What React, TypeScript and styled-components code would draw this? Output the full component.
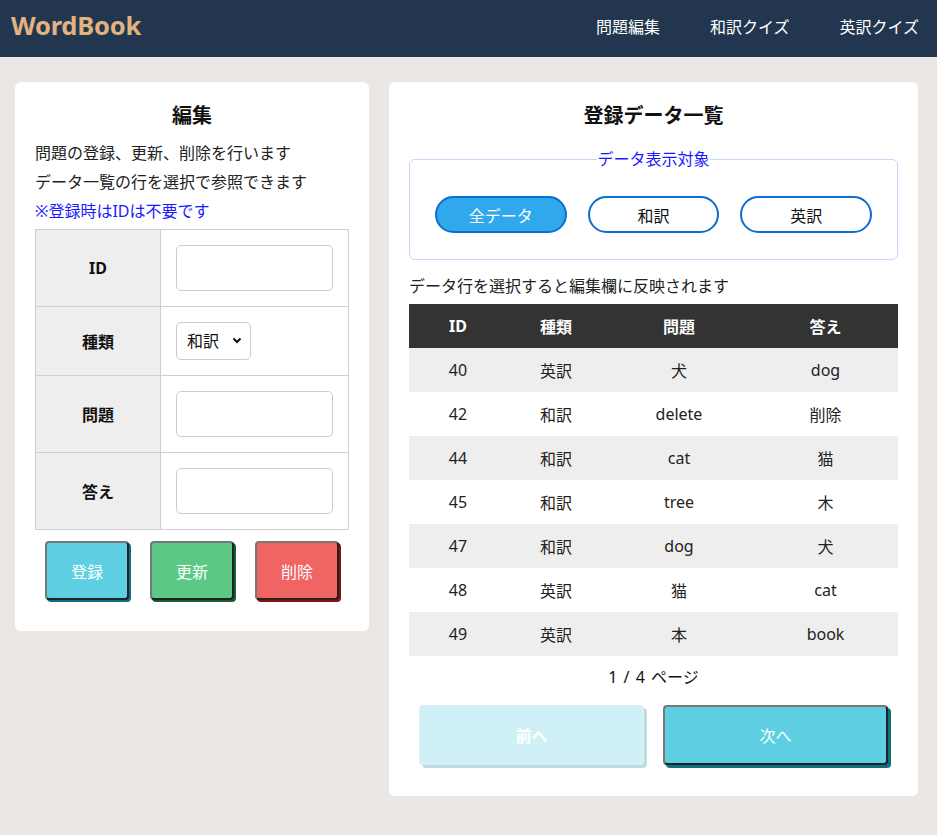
import React from "react";
import styled, { createGlobalStyle } from "styled-components";

const FONT = `"Noto Sans", "Noto Sans CJK JP", sans-serif`;

const GlobalStyle = createGlobalStyle`
  html, body {
    margin: 0;
    padding: 0;
    background: #ebe7e5;
    font-family: ${FONT};
    color: #222;
  }
  * { box-sizing: border-box; }
`;

const Header = styled.header`
  height: 57px;
  background: #22374f;
  display: flex;
  align-items: center;
  justify-content: space-between;
  padding: 0 18px 0 11px;
`;

const Logo = styled.div`
  font-size: 25.5px;
  font-weight: 700;
  color: #e3b37f;
  letter-spacing: -0.2px;
  margin-top: -7px;
`;

const Nav = styled.nav`
  display: flex;
  gap: 50px;
  margin-top: -6px;
`;

const NavItem = styled.a`
  color: #fff;
  font-size: 16px;
  text-decoration: none;
`;

const Main = styled.main`
  display: flex;
  align-items: flex-start;
  gap: 20px;
  padding: 25px 19px 20px 15px;
`;

const Card = styled.section<{ $width: number }>`
  width: ${(p) => p.$width}px;
  background: #fff;
  border-radius: 6px;
  padding: 20px 20px ${(p) => (p.$width > 400 ? 31 : 31)}px;
`;

const Title = styled.h2<{ $mb: number }>`
  margin: 0 0 ${(p) => p.$mb}px;
  font-size: 20px;
  line-height: 27px;
  font-weight: 700;
  text-align: center;
  color: #111;
`;

const Line = styled.p<{ $note?: boolean }>`
  margin: 0;
  font-size: 16px;
  line-height: 29px;
  color: ${(p) => (p.$note ? "#1a1aff" : "#222")};
`;

const FormTable = styled.table`
  margin-top: 3px;
  width: 100%;
  border-collapse: collapse;
  border: 1px solid #cfcfcf;
`;

const LabelCell = styled.th`
  width: 125px;
  background: #eeeeee;
  border: 1px solid #cfcfcf;
  font-size: 16px;
  font-weight: 700;
  color: #111;
  text-align: center;
`;

const FieldCell = styled.td<{ $h: number }>`
  height: ${(p) => p.$h}px;
  border: 1px solid #cfcfcf;
  padding: 0 15px;
`;

const TextInput = styled.input`
  display: block;
  width: 100%;
  height: 46px;
  border: 1px solid #cccccc;
  border-radius: 5px;
  font-family: ${FONT};
  font-size: 16px;
  padding: 0 10px;
  outline: none;
`;

const SelectWrap = styled.div`
  position: relative;
  width: 75px;
  height: 38px;
`;

const Select = styled.select`
  appearance: none;
  width: 100%;
  height: 100%;
  border: 1px solid #cccccc;
  border-radius: 5px;
  background: #fff;
  font-family: ${FONT};
  font-size: 16px;
  color: #111;
  padding: 0 0 0 10px;
`;

const Chevron = styled.svg`
  position: absolute;
  right: 9px;
  top: 15px;
  pointer-events: none;
`;

const ActionRow = styled.div`
  display: flex;
  justify-content: center;
  gap: 21px;
  margin-top: 11px;
`;

const ActionButton = styled.button<{ $bg: string; $shadow: string }>`
  width: 84px;
  height: 59px;
  background: ${(p) => p.$bg};
  border: 2px solid;
  border-color: #777 #222 #222 #777;
  border-radius: 4px;
  box-shadow: 2px 2px 0 ${(p) => p.$shadow};
  color: #fff;
  font-family: ${FONT};
  font-size: 16px;
`;

const Fieldset = styled.fieldset`
  margin: 0;
  border: 1px solid #ccd3f5;
  border-radius: 6px;
  padding: 25px 25px 26px;
  display: flex;
  gap: 21px;
`;

const Legend = styled.legend`
  margin: 0 auto;
  padding: 0;
  font-size: 16px;
  line-height: 24px;
  color: #1a1aff;
`;

const Pill = styled.button<{ $active?: boolean }>`
  flex: 1;
  height: 37px;
  border-radius: 19px;
  border: 2px solid #0b6fd0;
  background: ${(p) => (p.$active ? "#30a8ec" : "#fff")};
  color: ${(p) => (p.$active ? "#fff" : "#111")};
  font-family: ${FONT};
  font-size: 16px;
`;

const Hint = styled.p`
  margin: 14px 0 6px;
  font-size: 16px;
  line-height: 24px;
  color: #222;
`;

const DataTable = styled.table`
  width: 100%;
  border-collapse: collapse;
  table-layout: fixed;
`;

const HeadCell = styled.th<{ $w: number }>`
  width: ${(p) => p.$w}px;
  height: 44px;
  background: #333333;
  color: #fff;
  font-size: 16px;
  font-weight: 700;
  text-align: center;
  padding: 0;
`;

const Row = styled.tr<{ $striped: boolean }>`
  background: ${(p) => (p.$striped ? "#eeeeee" : "#ffffff")};
`;

const Cell = styled.td`
  height: 44px;
  text-align: center;
  font-size: 16px;
  color: #222;
  padding: 0;
`;

const PageInfo = styled.div`
  margin-top: 9px;
  text-align: center;
  font-size: 16px;
  line-height: 24px;
  color: #111;
  word-spacing: 2px;
`;

const PagerRow = styled.div`
  display: flex;
  gap: 19px;
  margin-top: 16px;
  padding: 0 10px;
`;

const PagerButton = styled.button<{ $disabled?: boolean }>`
  flex: 1;
  height: 60px;
  border-radius: 4px;
  border: 2px solid;
  border-color: ${(p) =>
    p.$disabled ? "#d8eff4" : "#777 #222 #222 #777"};
  background: ${(p) => (p.$disabled ? "#d0f0f7" : "#5ecfe3")};
  box-shadow: 3px 3px 0 ${(p) => (p.$disabled ? "#bfdce2" : "#0e6f80")};
  color: #fff;
  font-family: ${FONT};
  font-size: 16px;
  font-weight: ${(p) => (p.$disabled ? 700 : 400)};
`;

const rows = [
  ["40", "英訳", "犬", "dog"],
  ["42", "和訳", "delete", "削除"],
  ["44", "和訳", "cat", "猫"],
  ["45", "和訳", "tree", "木"],
  ["47", "和訳", "dog", "犬"],
  ["48", "英訳", "猫", "cat"],
  ["49", "英訳", "本", "book"],
];

export default function App() {
  return (
    <>
      <GlobalStyle />
      <Header>
        <Logo>WordBook</Logo>
        <Nav>
          <NavItem>問題編集</NavItem>
          <NavItem>和訳クイズ</NavItem>
          <NavItem>英訳クイズ</NavItem>
        </Nav>
      </Header>
      <Main>
        <Card $width={354}>
          <Title $mb={10}>編集</Title>
          <Line>問題の登録、更新、削除を行います</Line>
          <Line>データ一覧の行を選択で参照できます</Line>
          <Line $note>※登録時はIDは不要です</Line>
          <FormTable>
            <tbody>
              <tr>
                <LabelCell>ID</LabelCell>
                <FieldCell $h={77}>
                  <TextInput />
                </FieldCell>
              </tr>
              <tr>
                <LabelCell>種類</LabelCell>
                <FieldCell $h={69}>
                  <SelectWrap>
                    <Select defaultValue="ja">
                      <option value="ja">和訳</option>
                      <option value="en">英訳</option>
                    </Select>
                    <Chevron width="10" height="7" viewBox="0 0 10 7">
                      <path d="M1.5 1.5 L5 5 L8.5 1.5" fill="none" stroke="#111" strokeWidth="2" />
                    </Chevron>
                  </SelectWrap>
                </FieldCell>
              </tr>
              <tr>
                <LabelCell>問題</LabelCell>
                <FieldCell $h={77}>
                  <TextInput />
                </FieldCell>
              </tr>
              <tr>
                <LabelCell>答え</LabelCell>
                <FieldCell $h={77}>
                  <TextInput />
                </FieldCell>
              </tr>
            </tbody>
          </FormTable>
          <ActionRow>
            <ActionButton $bg="#5ecfe3" $shadow="#0e6f80">登録</ActionButton>
            <ActionButton $bg="#5bc985" $shadow="#1d5a3a">更新</ActionButton>
            <ActionButton $bg="#f06464" $shadow="#8b0e14">削除</ActionButton>
          </ActionRow>
        </Card>
        <Card $width={529}>
          <Title $mb={18}>登録データ一覧</Title>
          <Fieldset>
            <Legend>データ表示対象</Legend>
            <Pill $active>全データ</Pill>
            <Pill>和訳</Pill>
            <Pill>英訳</Pill>
          </Fieldset>
          <Hint>データ行を選択すると編集欄に反映されます</Hint>
          <DataTable>
            <thead>
              <tr>
                <HeadCell $w={98}>ID</HeadCell>
                <HeadCell $w={98}>種類</HeadCell>
                <HeadCell $w={148}>問題</HeadCell>
                <HeadCell $w={145}>答え</HeadCell>
              </tr>
            </thead>
            <tbody>
              {rows.map((r, i) => (
                <Row key={r[0]} $striped={i % 2 === 0}>
                  {r.map((c, j) => (
                    <Cell key={j}>{c}</Cell>
                  ))}
                </Row>
              ))}
            </tbody>
          </DataTable>
          <PageInfo>1 / 4 ページ</PageInfo>
          <PagerRow>
            <PagerButton $disabled>前へ</PagerButton>
            <PagerButton>次へ</PagerButton>
          </PagerRow>
        </Card>
      </Main>
    </>
  );
}
